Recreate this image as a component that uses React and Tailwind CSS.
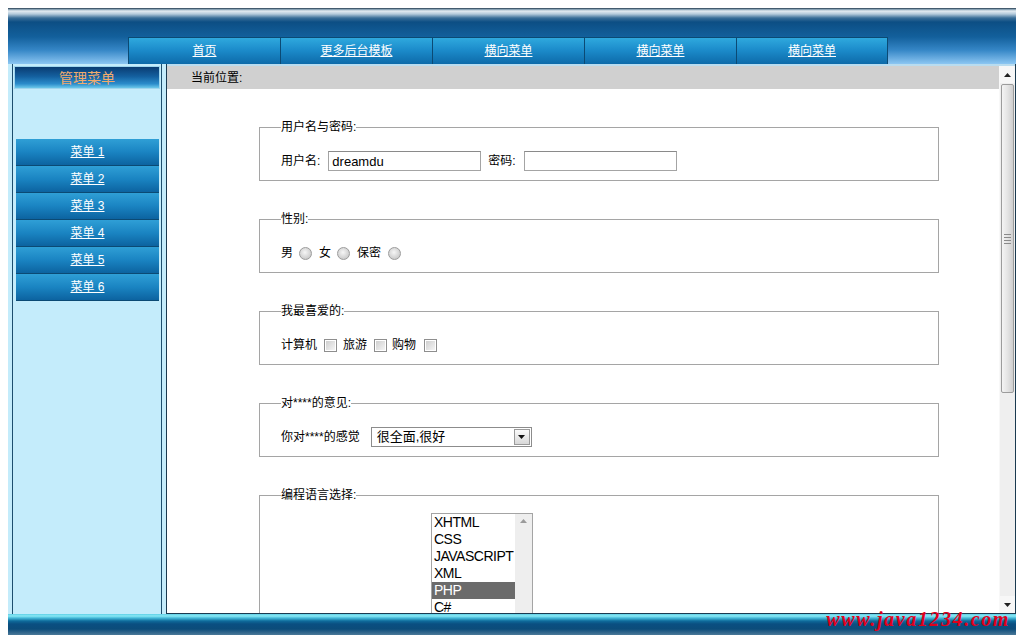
const navItems = ['首页', '更多后台模板', '横向菜单', '横向菜单', '横向菜单']
const menus = ['菜单 1', '菜单 2', '菜单 3', '菜单 4', '菜单 5', '菜单 6']
const langs = ['XHTML', 'CSS', 'JAVASCRIPT', 'XML', 'PHP', 'C#']

const Radio = () => (
  <span className="inline-block w-[13px] h-[13px] rounded-full border border-[#9c9c9c] bg-[radial-gradient(circle_at_45%_40%,#f6f6f6_0%,#d6d6d6_55%,#bdbdbd_100%)]" />
)

const Check = () => (
  <span className="inline-block w-[13px] h-[13px] border border-[#8e8e8e] bg-white p-[1px]">
    <span className="block w-full h-full bg-[linear-gradient(135deg,#cfcfcf,#f4f4f4)]" />
  </span>
)

const Box = ({ legend, children, className = '' }) => (
  <fieldset className={`ml-[92px] mt-[31px] w-[680px] border border-[#a5a5a5] pl-[21px] pr-4 ${className}`}>
    <legend className="text-[12px] leading-[14px] text-black">{legend}</legend>
    {children}
  </fieldset>
)

const Row = ({ children }) => (
  <div className="flex items-center h-[20px] text-[12px] text-black">{children}</div>
)

export default function App() {
  return (
    <div className="min-h-screen bg-white p-2 font-['Liberation_Sans','Noto_Sans_CJK_SC',sans-serif]">
      <div className="relative w-[1008px]">
        {/* top banner */}
        <div className="h-[56px] flex flex-col bg-[linear-gradient(to_bottom,#1c2c3c_0px,#6a8aa0_1px,#e4ecf2_3px,#b4cadb_6px,#3a6e98_10px,#0c4e84_14px,#13609c_29px,#3586c6_42px,#8cc6f2_56px)]">
          <div className="h-[29px]" />
          <div className="h-[27px] flex">
            <div className="w-[120px]" />
            {navItems.map((n, i) => (
              <div
                key={i}
                className="w-[152px] border-l border-t border-[#0b4a74] last:border-r flex items-center justify-center bg-[linear-gradient(to_bottom,#2fa9de_0%,#1c8ccb_45%,#0d6aa9_100%)]"
              >
                <a href="#" className="text-white underline text-[12px] leading-[14px]">{n}</a>
              </div>
            ))}
          </div>
        </div>

        <div className="flex h-[550px]">
          {/* left menu */}
          <div className="w-[158px] bg-[#c4ecfb]">
            <div className="ml-[4px] w-[150px] h-full border-x border-[#1d4e6e] px-[1px] pt-[2px]">
              <div className="h-[23px] border border-[#9fd6ee] flex items-center justify-center bg-[linear-gradient(to_bottom,#0a3c72_0%,#14609f_45%,#2b8ccb_80%,#6cc8ea_100%)]">
                <span className="text-[14px] leading-[16px] text-[#f2ab6c]">管理菜单</span>
              </div>
              <div className="mt-[50px] ml-[2px] w-[143px] flex flex-col">
                {menus.map(m => (
                  <div
                    key={m}
                    className="h-[27px] border-b border-[#0b4a74] flex items-center justify-center bg-[linear-gradient(to_bottom,#2f9fd6_0%,#1a84c2_50%,#0c63a0_100%)]"
                  >
                    <a href="#" className="text-white underline text-[12px] leading-[14px]">{m}</a>
                  </div>
                ))}
              </div>
            </div>
          </div>

          {/* content */}
          <div className="flex-1 bg-[#b9dcef] pt-[2px] border-l border-r border-b border-[#1a3a50] flex">
            <div className="flex-1 bg-white overflow-hidden">
              <div className="h-[23px] bg-[#d0d0d0] pl-[24px] flex items-center text-[12px] leading-[14px] text-black">当前位置:</div>

              <Box legend="用户名与密码:" className="pt-[17px] pb-[9px]">
                <Row>
                  <span>用户名:</span>
                  <input
                    defaultValue="dreamdu"
                    className="ml-[8px] w-[153px] h-[20px] border border-[#a4a4a4] border-t-[#8a8a8a] px-[3px] text-[13px] text-black outline-none"
                  />
                  <span className="ml-[7px]">密码:</span>
                  <input
                    type="password"
                    className="ml-[8px] w-[153px] h-[20px] border border-[#a4a4a4] border-t-[#8a8a8a] px-[3px] text-[13px] outline-none"
                  />
                </Row>
              </Box>

              <Box legend="性别:" className="pt-[17px] pb-[9px]">
                <Row>
                  <span>男</span>
                  <span className="ml-[6px] flex"><Radio /></span>
                  <span className="ml-[7px]">女</span>
                  <span className="ml-[6px] flex"><Radio /></span>
                  <span className="ml-[7px]">保密</span>
                  <span className="ml-[7px] flex"><Radio /></span>
                </Row>
              </Box>

              <Box legend="我最喜爱的:" className="pt-[17px] pb-[9px]">
                <Row>
                  <span>计算机</span>
                  <span className="ml-[7px] flex"><Check /></span>
                  <span className="ml-[6px]">旅游</span>
                  <span className="ml-[7px] flex"><Check /></span>
                  <span className="ml-[5px]">购物</span>
                  <span className="ml-[8px] flex"><Check /></span>
                </Row>
              </Box>

              <Box legend="对****的意见:" className="pt-[17px] pb-[9px]">
                <Row>
                  <span>你对****的感觉</span>
                  <div className="ml-[11px] w-[161px] h-[20px] border border-[#8c8c8c] flex items-center justify-between pl-[5px] pr-[1px]">
                    <span className="text-[13px] leading-[16px]">很全面,很好</span>
                    <span className="w-[16px] h-[16px] border border-[#9a9a9a] bg-[linear-gradient(to_bottom,#fafafa,#d8d8d8)] flex items-center justify-center">
                      <svg width="7" height="4" viewBox="0 0 7 4"><path d="M0 0h7L3.5 4z" fill="#111" /></svg>
                    </span>
                  </div>
                </Row>
              </Box>

              <Box legend="编程语言选择:" className="pt-[11px] pb-[9px]">
                <div className="ml-[150px] w-[102px] h-[130px] border border-[#a4a4a4] flex">
                  <div className="w-[83px] flex flex-col">
                    {langs.map(l => (
                      <div
                        key={l}
                        className={`h-[17px] pl-[2px] text-[14px] leading-[17px] tracking-[-0.5px] whitespace-nowrap ${l === 'PHP' ? 'bg-[#6b6b6b] text-white' : 'text-black'}`}
                      >
                        {l}
                      </div>
                    ))}
                  </div>
                  <div className="w-[17px] bg-[#eeeeee] flex justify-center pt-[5px]">
                    <svg width="7" height="4" viewBox="0 0 7 4"><path d="M3.5 0L7 4H0z" fill="#9a9a9a" /></svg>
                  </div>
                </div>
              </Box>
            </div>

            {/* scrollbar */}
            <div className="w-[16px] bg-[#efefef] flex flex-col border-l border-[#f8f8f8]">
              <div className="h-[17px] bg-[#f7f7f7] flex items-center justify-center">
                <svg width="7" height="4" viewBox="0 0 7 4"><path d="M3.5 0L7 4H0z" fill="#222" /></svg>
              </div>
              <div className="h-[309px] mt-[1px] mx-[1px] border border-[#9c9c9c] rounded-[2px] bg-[linear-gradient(to_right,#f4f4f4,#e4e4e4_50%,#cfcfcf)] flex flex-col items-center justify-center gap-[2px]">
                <span className="w-[7px] h-[1px] bg-[#8a8a8a]" />
                <span className="w-[7px] h-[1px] bg-[#8a8a8a]" />
                <span className="w-[7px] h-[1px] bg-[#8a8a8a]" />
                <span className="w-[7px] h-[1px] bg-[#8a8a8a]" />
              </div>
              <div className="flex-1" />
              <div className="h-[17px] bg-[#f7f7f7] flex items-center justify-center">
                <svg width="7" height="4" viewBox="0 0 7 4"><path d="M0 0h7L3.5 4z" fill="#222" /></svg>
              </div>
            </div>
          </div>
        </div>

        {/* footer */}
        <div className="h-[21px] bg-[linear-gradient(to_bottom,#5fcfe6_0px,#8ae8f4_2px,#45bad9_4px,#0f6b9b_7px,#0a4f81_10px,#0c4c7a_15px,#4a7898_21px)]" />
        <div className="absolute right-[6px] bottom-[6px] text-[20px] leading-[20px] font-bold italic tracking-[1.6px] text-[#e0001c] font-['Liberation_Serif',serif]">
          www.java1234.com
        </div>
      </div>
    </div>
  )
}
